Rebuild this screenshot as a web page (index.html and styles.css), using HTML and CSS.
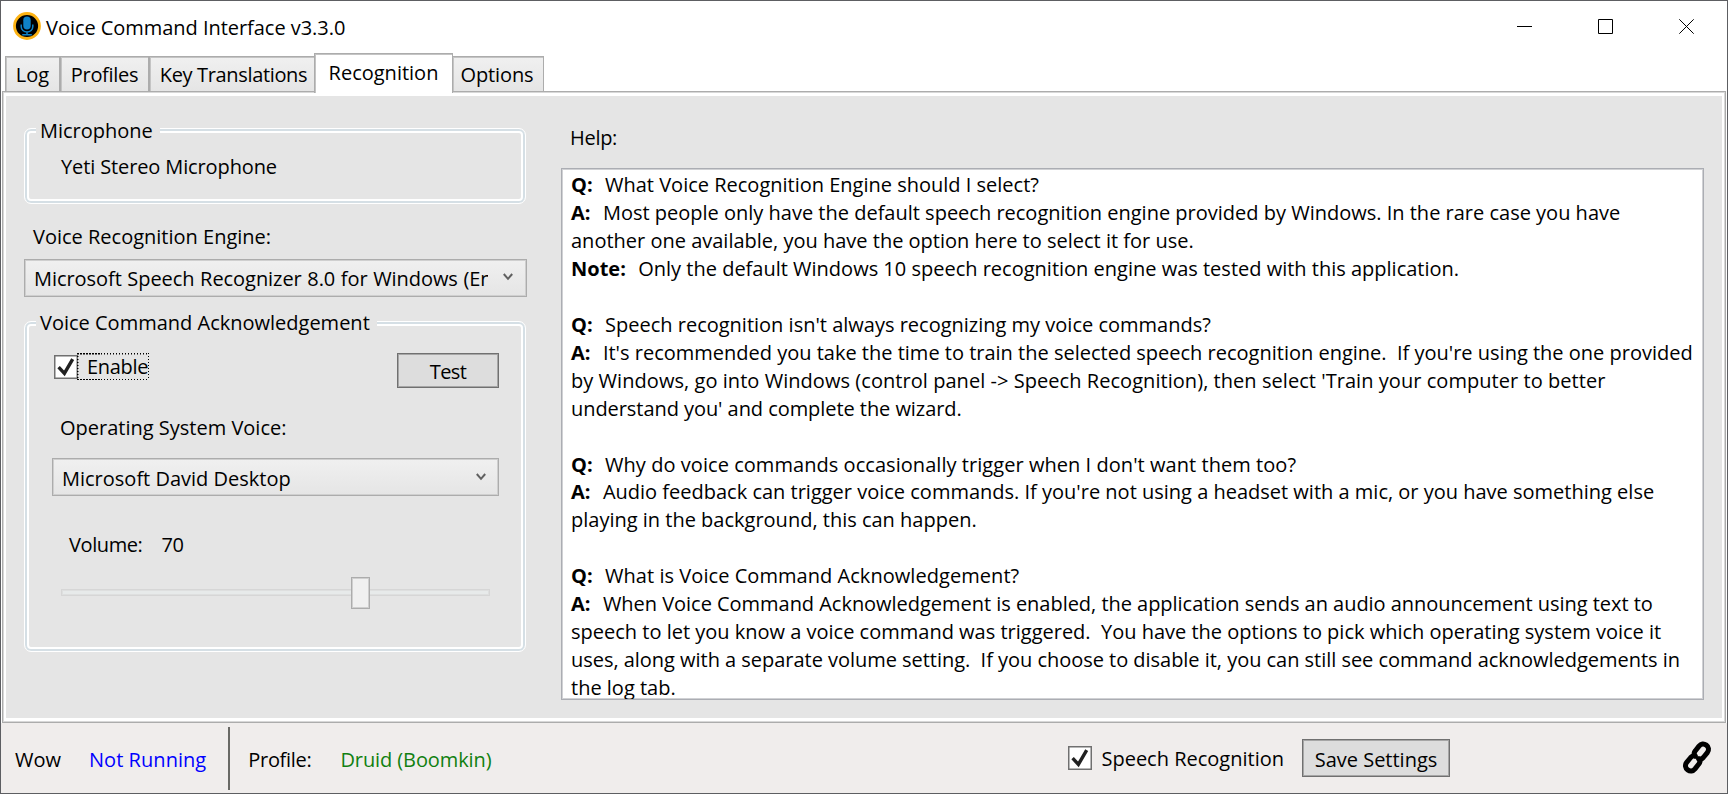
FILE: index.html
```html
<!DOCTYPE html>
<html lang="en">
<head>
<meta charset="utf-8">
<title>Voice Command Interface v3.3.0</title>
<link rel="stylesheet" href="styles.css">
</head>
<body>
<div class="window">
  <header class="titlebar">
    <svg class="app-icon" viewBox="0 0 28 28">
      <circle cx="14" cy="14" r="12.5" fill="#000" stroke="#fdb314" stroke-width="2.8"/>
      <rect x="10.3" y="4.5" width="7.4" height="13" rx="3.7" fill="#0f82c6"/>
      <path d="M8.2 12.5v2.2a5.8 5.3 0 0 0 11.6 0v-2.2M14 20v2.6M9.2 22.7h9.6" fill="none" stroke="#0f82c6" stroke-width="1.5"/>
    </svg>
    <h1 class="title">Voice Command Interface v3.3.0</h1>
    <div class="controls">
      <svg class="control" viewBox="0 0 15 15"><path d="M0 7.5h15"/></svg>
      <svg class="control" viewBox="0 0 15 15"><path d="M.5.5h14v14H.5z"/></svg>
      <svg class="control" viewBox="0 0 15 15"><path d="M.3.3l14.4 14.4M14.7.3L.3 14.7"/></svg>
    </div>
  </header>
  <nav class="tabs">
    <span class="tab tab-log">Log</span>
    <span class="tab tab-profiles">Profiles</span>
    <span class="tab tab-keys">Key Translations</span>
    <span class="tab tab-active">Recognition</span>
    <span class="tab tab-options">Options</span>
  </nav>
  <main class="panel">
    <div class="pane">
      <section class="settings">
        <div class="group group-mic">
          <span class="legend">Microphone</span>
          <span class="mic-name">Yeti Stereo Microphone</span>
        </div>
        <label class="label engine-label">Voice Recognition Engine:</label>
        <div class="combo combo-engine">
          <span class="combo-text">Microsoft Speech Recognizer 8.0 for Windows (En</span>
          <svg class="chevron" viewBox="0 0 10 8"><path d="M.8 1L5 5.8 9.2 1"/></svg>
        </div>
        <div class="group group-ack">
          <span class="legend">Voice Command Acknowledgement</span>
          <div class="enable-row">
            <div class="check">
              <svg class="box" viewBox="0 0 24 24"><rect x=".75" y=".75" width="22.5" height="22.5"/><path d="M4.6 12.2l5.8 6.2 8.3-14.2"/></svg>
              <span class="focus">Enable</span>
            </div>
            <span class="button test">Test</span>
          </div>
          <label class="label voice-label">Operating System Voice:</label>
          <div class="combo combo-voice">
            <span class="combo-text">Microsoft David Desktop</span>
            <svg class="chevron" viewBox="0 0 10 8"><path d="M.8 1L5 5.8 9.2 1"/></svg>
          </div>
          <div class="volume"><span>Volume:</span><span>70</span></div>
          <div class="slider"><div class="thumb"></div></div>
        </div>
      </section>
      <section class="help">
        <span class="label">Help:</span>
        <div class="help-box"><b>Q:</b>  What Voice Recognition Engine should I select?
<b>A:</b>  Most people only have the default speech recognition engine provided by Windows. In the rare case you have
another one available, you have the option here to select it for use.
<b>Note:</b>  Only the default Windows 10 speech recognition engine was tested with this application.

<b>Q:</b>  Speech recognition isn't always recognizing my voice commands?
<b>A:</b>  It's recommended you take the time to train the selected speech recognition engine.  If you're using the one provided
<span class="loose">by Windows, go into Windows (control panel -&gt; Speech Recognition), then select 'Train your computer to better</span>
<span class="tight">understand you' and complete the wizard.</span>

<b>Q:</b>  <span class="loose">Why do voice commands occasionally trigger when I don't want them too?</span>
<b>A:</b>  Audio feedback can trigger voice commands. If you're not using a headset with a mic, or you have something else
playing in the background, this can happen.

<b>Q:</b>  <span class="loose">What is Voice Command Acknowledgement?</span>
<b>A:</b>  <span class="snug">When Voice Command Acknowledgement is enabled, the application sends an audio announcement using text to</span>
speech to let you know a voice command was triggered.  You have the options to pick which operating system voice it
<span class="snug">uses, along with a separate volume setting.  If you choose to disable it, you can still see command acknowledgements in</span>
the log tab.</div>
      </section>
    </div>
  </main>
  <footer class="status">
    <div class="status-left">
      <span class="wow">Wow</span>
      <span class="state">Not Running</span>
      <span class="divider"></span>
      <span class="profile-label">Profile:</span>
      <span class="profile">Druid (Boomkin)</span>
    </div>
    <div class="status-right">
      <svg class="box" viewBox="0 0 24 24"><rect x=".75" y=".75" width="22.5" height="22.5"/><path d="M4.6 12.2l5.8 6.2 8.3-14.2"/></svg>
      <span class="speech">Speech Recognition</span>
      <span class="button save">Save Settings</span>
      <svg class="link" viewBox="0 0 30 33">
        <g fill="none" stroke="#000" stroke-width="5" stroke-linecap="round" stroke-linejoin="round">
          <path d="M13.2 15.2c-1.600-1.900-1.200-3.900.2-5.500l3.600-4.600c2-2.400 4.800-2.800 7.300-1s3 5 1 7.500l-4 4.900c-1.300 1.500-2.900 1.900-4.400 1.500"/>
          <path d="M16.800 17.800c1.600 1.900 1.200 3.900-.2 5.500l-3.600 4.600c-2 2.400-4.800 2.800-7.300 1s-3-5-1-7.500l4-4.900c1.300-1.500 2.900-1.900 4.400-1.500"/>
        </g>
      </svg>
    </div>
  </footer>
</div>
</body>
</html>
```
FILE: styles.css
```css
* { box-sizing: border-box; }
body {
  margin: 0;
  font: 20px/28px "Open Sans", "Noto Sans", sans-serif;
  color: #000;
}
.window {
  width: 1728px;
  height: 794px;
  display: flex;
  flex-direction: column;
  border: 1px solid #5d5e62;
  background: #fff;
  overflow: hidden;
  white-space: nowrap;
}

/* Title bar */
.titlebar {
  height: 51px;
  display: flex;
  align-items: flex-start;
  padding-left: 12px;
}
.app-icon { width: 28px; height: 28px; margin-top: 11px; }
.title {
  margin: 13px 0 0 5px;
  font-size: 20px;
  font-weight: 400;
  letter-spacing: -.04px;
}
.controls {
  display: flex;
  gap: 66px;
  margin: 18px 33px 0 auto;
}
.control { width: 15px; height: 15px; fill: none; stroke: #000; stroke-width: 1; }

/* Tabs */
.tabs {
  height: 39px;
  display: flex;
  align-items: flex-end;
  padding-left: 4px;
}
.tab {
  height: 35px;
  padding-top: 4px;
  text-align: center;
  border: 1px solid #acacac;
  border-bottom: 0;
  box-shadow: inset 1px 1px #c4c4c4;
  background: linear-gradient(#f0f0f0, #e5e5e5);
}
.tab-log { width: 55px; }
.tab-profiles { width: 89px; letter-spacing: -.3px; }
.tab-keys { width: 166px; padding-left: 3px; letter-spacing: -.35px; }
.tab-active {
  position: relative;
  z-index: 1;
  width: 139px;
  height: 40px;
  margin: 0 -1px -2px;
  padding-top: 5px;
  background: #fff;
}
.tab-options { width: 92px; padding-right: 2px; letter-spacing: -.1px; }

/* Tab content */
.panel {
  height: 632px;
  margin: 0 1px;
  padding: 4px 3px;
  border: 1px solid #acacac;
  box-shadow: inset 0 0 0 1px #d8d8d8;
}
.pane {
  height: 622px;
  display: flex;
  background: #e5e5e5;
}
.settings {
  width: 503px;
  margin-left: 18px;
  padding-top: 32px;
  display: flex;
  flex-direction: column;
}
.group {
  position: relative;
  width: 502px;
  border: 1px solid #fff;
  border-radius: 7px;
  box-shadow: inset 0 0 0 2px #d5dfe5, inset 0 0 0 4px #fff;
}
.legend {
  position: absolute;
  left: 11px;
  top: -12px;
  padding: 0 7px 0 4px;
  background: #e5e5e5;
}
.group-mic { height: 76px; padding: 24px 0 0 36px; }
.mic-name { letter-spacing: -.12px; }
.engine-label { margin: 19px 0 0 9px; }
.combo {
  height: 38px;
  margin-top: 8px;
  padding: 5px 14px 0 9px;
  display: flex;
  justify-content: space-between;
  border: 1px solid #acacac;
  box-shadow: inset 0 0 0 1px #cfcfcf;
  background: linear-gradient(#f0f0f0, #e5e5e5);
}
.combo-text { overflow: hidden; }
.combo-engine .combo-text {
  width: 454px;
  letter-spacing: -.05px;
  word-spacing: .4px;
}
.chevron {
  width: 10px;
  height: 8px;
  flex: none;
  margin: 8px -2px 0 0;
  fill: none;
  stroke: #606060;
  stroke-width: 2;
}
.combo-engine .chevron { margin-right: -1px; }
.group-ack {
  height: 331px;
  margin-top: 24px;
  padding: 31px 26px 0 27px;
}
.group-ack .legend { top: -13px; }
.enable-row { display: flex; justify-content: space-between; }
.check { display: flex; align-items: flex-start; padding: 0 0 0 2px; }
.box { width: 24px; height: 24px; flex: none; }
.box rect { fill: #fff; stroke: #707070; stroke-width: 1.5; }
.box path { fill: none; stroke: #212121; stroke-width: 3.4; }
.check .box { margin-top: 2px; }
.focus {
  height: 27px;
  width: 72px;
  margin-left: -1px;
  padding-left: 10px;
  line-height: 28px;
  letter-spacing: -.3px;
  --dots: #000 0 1.5px, transparent 1.5px 3px;
  background:
    repeating-linear-gradient(90deg, var(--dots)) 0 0 / 100% 1.5px no-repeat,
    repeating-linear-gradient(90deg, var(--dots)) 0 100% / 100% 1.5px no-repeat,
    repeating-linear-gradient(var(--dots)) 0 0 / 1.5px 100% no-repeat,
    repeating-linear-gradient(var(--dots)) 100% 0 / 1.5px 100% no-repeat;
}
.button {
  display: block;
  text-align: center;
  border: 1px solid #707070;
  box-shadow: inset 0 0 0 1px #a6a6a6;
  background: #ddd;
}
.test { width: 102px; height: 35px; padding-top: 4px; letter-spacing: -.6px; }
.voice-label { display: block; margin: 26px 0 0 8px; }
.combo-voice { margin-top: 16px; padding-top: 6px; }
.volume { display: flex; gap: 19px; margin: 35px 0 0 17px; letter-spacing: -.4px; }
.slider {
  position: relative;
  height: 7px;
  width: 429px;
  margin: 30px 0 0 9px;
  border: 1px solid #d6d6d6;
  box-shadow: inset 0 0 0 1px #dedfdf;
  background: #e7eaea;
}
.thumb {
  position: absolute;
  left: 289px;
  top: -13px;
  width: 19px;
  height: 32px;
  border: 1px solid #acacac;
  box-shadow: inset 0 0 0 1px #cfcfcf;
  background: #f0f0f0;
}

/* Help */
.help { margin-left: 34px; padding-top: 28px; }
.help .label { display: block; margin-left: 9px; letter-spacing: -.3px; }
.help-box {
  width: 1143px;
  height: 532px;
  margin-top: 16px;
  padding: 2px 0 0 9px;
  border: 1px solid #abadb3;
  box-shadow: inset 0 0 0 1px #d0d1d4;
  background: #fff;
  line-height: 27.96px;
  white-space: pre;
  overflow: hidden;
}
.help-box b { margin-right: 2px; }
.loose { letter-spacing: .05px; }
.snug { letter-spacing: -.03px; }
.tight { letter-spacing: -.06px; }

/* Status bar */
.status {
  flex: 1;
  display: flex;
  justify-content: space-between;
  background: #f0edec;
}
.status-left, .status-right { display: flex; align-items: flex-start; }
.status-left > span { margin-top: 23px; }
.wow { margin-left: 14px; }
.state { margin-left: 28px; color: #00f; letter-spacing: .05px; }
.status-left > .divider {
  width: 2px;
  height: 63px;
  margin: 4px 18px 0 22px;
  background: #696965;
}
.profile-label { letter-spacing: -.3px; }
.profile { margin-left: 29px; color: #108010; letter-spacing: -.1px; }
.status-right .box { margin-top: 23px; }
.speech { margin: 22px 18px 0 9px; }
.save { width: 148px; height: 38px; margin-top: 16px; padding-top: 6px; }
.link { width: 30px; height: 33px; margin: 18px 15px 0 232px; overflow: visible; }
```
